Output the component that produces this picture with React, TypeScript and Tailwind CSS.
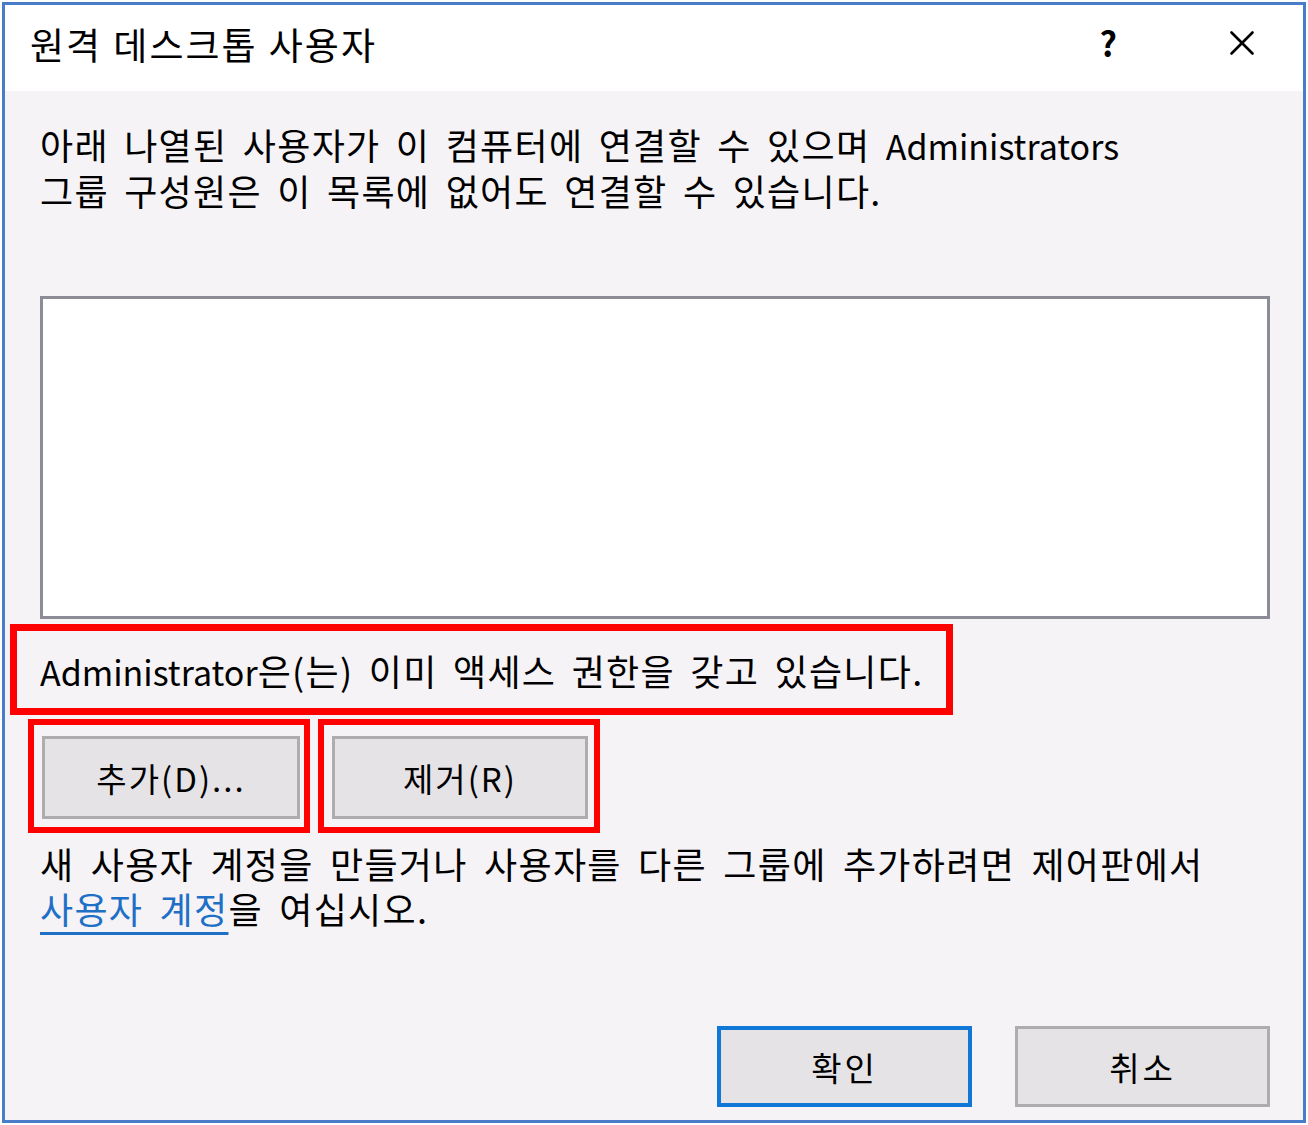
import { X } from "lucide-react";

const font = { fontFamily: '"Noto Sans CJK KR", "Noto Sans", sans-serif' };

const App = () => {
  return (
    <div className="w-[1308px] h-[1125px] bg-white pt-[2px] pl-[2px]" style={font}>
      <div className="w-[1304px] h-[1121px] border-[3px] border-[#4a7dc9] bg-[#f6f3f6] flex flex-col text-black">
        {/* title bar */}
        <div className="h-[86px] bg-white flex items-center pl-[25px] shrink-0">
          <span className="text-[37px] leading-none tracking-[2px] [word-spacing:1px] -mt-[8px]">원격 데스크톱 사용자</span>
          <span className="ml-auto text-[34px] font-semibold leading-none -mt-[10px] mr-[104px]">?</span>
          <X className="w-[42px] h-[42px] mr-[40px] -mt-[10px]" strokeWidth={1.5} />
        </div>

        <div className="flex flex-col pl-[35px] pr-[33px] text-[36px] leading-[44px] tracking-[1.3px] [word-spacing:6px]">
          <p className="mt-[31px]">
            아래 나열된 사용자가 이 컴퓨터에 연결할 수 있으며{" "}
            <span className="text-[34px] tracking-normal">Administrators</span>
            <br />
            그룹 구성원은 이 목록에 없어도 연결할 수 있습니다.
          </p>

          <div className="mt-[84px] h-[323px] bg-white border-[3px] border-[#8c8c96]" />

          <div className="mt-[5px] -ml-[30px] w-[943px] h-[91px] border-[7px] border-[#ff0000] flex items-center pl-[23px]">
            <span className="mt-[2px]">
              <span className="text-[34px] tracking-normal">Administrator</span>은(는) 이미 액세스 권한을 갖고 있습니다.
            </span>
          </div>

          <div className="mt-[4px] -ml-[12px] flex gap-[8px] tracking-[2px]">
            <div className="w-[282px] h-[114px] border-[6px] border-[#ff0000] pl-[8px] pr-[4px] pt-[11px] pb-[8px]">
              <button className="w-full h-full bg-[#e6e3e6] border-[3px] border-[#adadad] text-[33px] flex items-center justify-center">
                추가(D)...
              </button>
            </div>
            <div className="w-[282px] h-[114px] border-[6px] border-[#ff0000] pl-[8px] pr-[6px] pt-[11px] pb-[8px]">
              <button className="w-full h-full bg-[#e6e3e6] border-[3px] border-[#adadad] text-[33px] flex items-center justify-center">
                제거(R)
              </button>
            </div>
          </div>

          <p className="mt-[8px] leading-[45px] [word-spacing:7px]">
            새 사용자 계정을 만들거나 사용자를 다른 그룹에 추가하려면 제어판에서
            <br />
            <a className="text-[#1e6fc6] underline underline-offset-[8px] decoration-[3px]">사용자 계정</a>을 여십시오.
          </p>

          <div className="mt-[95px] flex justify-end gap-[43px] tracking-[3px]">
            <button className="w-[255px] h-[81px] bg-[#e6e3e6] border-[4px] border-[#0f78d7] text-[33px] flex items-center justify-center">
              확인
            </button>
            <button className="w-[255px] h-[81px] bg-[#e6e3e6] border-[3px] border-[#adadad] text-[33px] flex items-center justify-center">
              취소
            </button>
          </div>
        </div>
      </div>
    </div>
  );
};

export default App;
